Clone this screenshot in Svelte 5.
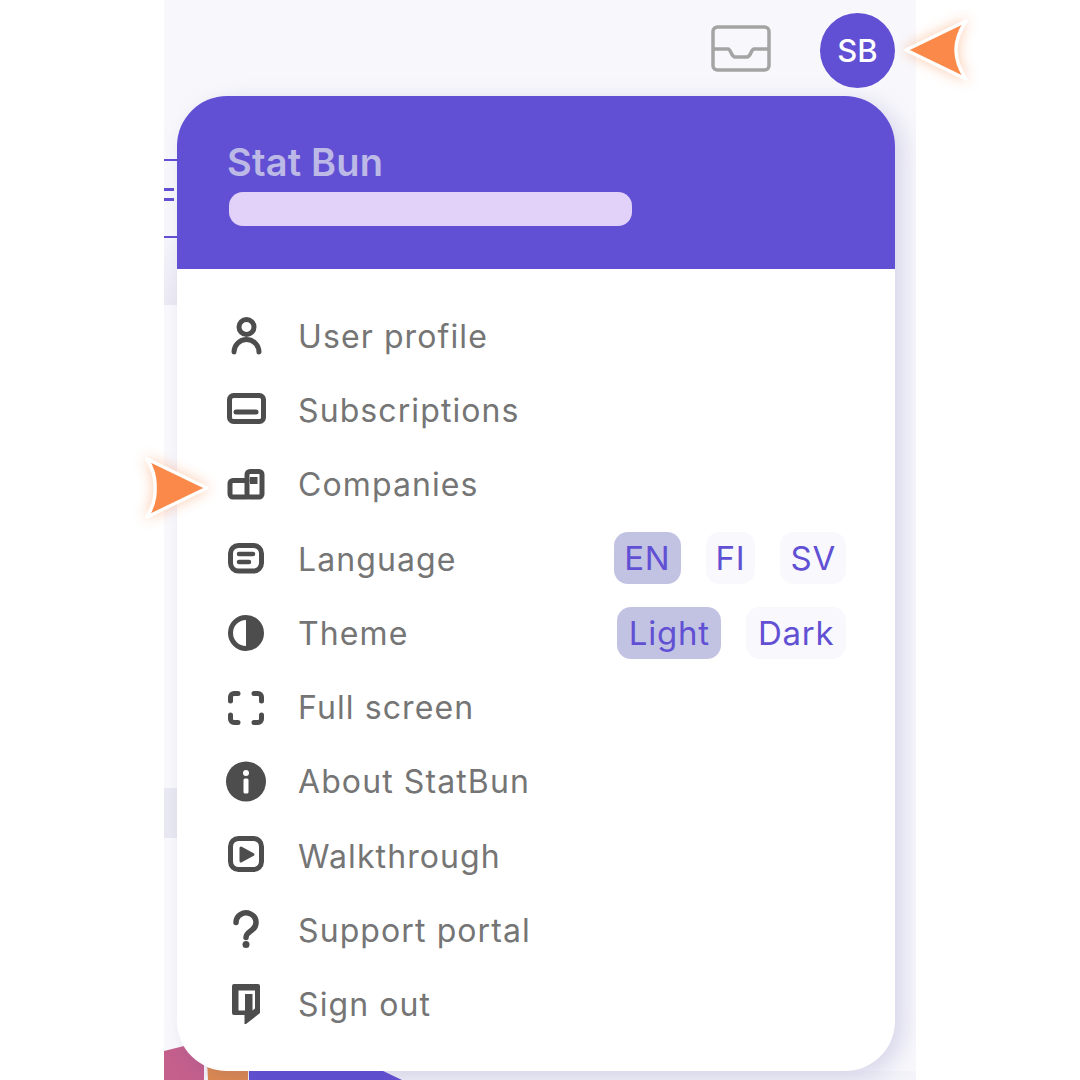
<script>
  const rows = [
    { id: 'user', label: 'User profile' },
    { id: 'card', label: 'Subscriptions' },
    { id: 'companies', label: 'Companies' },
    { id: 'language', label: 'Language', options: [{ text: 'EN', on: true }, { text: 'FI' }, { text: 'SV' }] },
    { id: 'theme', label: 'Theme', options: [{ text: 'Light', on: true }, { text: 'Dark' }] },
    { id: 'full', label: 'Full screen' },
    { id: 'about', label: 'About StatBun' },
    { id: 'walk', label: 'Walkthrough' },
    { id: 'support', label: 'Support portal' },
    { id: 'signout', label: 'Sign out' }
  ];
</script>

<div class="stage">
  <div class="page">
    <!-- what is left visible of the dashboard behind the menu -->
    <div class="behind">
      <div class="tab-lines"><span class="tab-glyph"></span></div>
      <div class="gap first"></div>
      <div class="back-card first"></div>
      <div class="gap second"></div>
      <div class="back-card second">
        <svg class="pie" viewBox="0 0 752 40" width="752" height="40">
          <rect x="150" y="31" width="602" height="9" fill="#f3f3f9" />
          <path d="M0 11L40 1V40H0Z" fill="#c5608c" />
          <path d="M42 0H84V40H44Z" fill="#e08b4c" />
          <path d="M85 20H196L238 40H85Z" fill="#6150d3" />
        </svg>
      </div>
    </div>

    <header class="topbar">
      <svg class="inbox" viewBox="0 0 60 47" width="60" height="47">
        <path d="M6.5 2H53.5A4.5 4.5 0 0 1 58 6.500V40.500A4.500 4.500 0 0 1 53.500 45H6.500A4.500 4.500 0 0 1 2 40.500V6.500A4.500 4.500 0 0 1 6.500 2ZM2 24H17C20 24 20 32 24 32H36C40 32 40 24 43 24H58" />
      </svg>
      <div class="avatar">SB</div>
    </header>

    <section class="menu">
      <div class="menu-head">
        <div class="name">Stat Bun</div>
        <div class="email"></div>
      </div>
      <ul class="menu-list">
        {#each rows as row}
          <li class="row">
            <svg class="icon" viewBox="0 0 40 40" width="40" height="40">
              {#if row.id === 'user'}
                <circle class="line" cx="20.500" cy="11" r="7.500" />
                <path class="line" d="M8 36a12.500 12.500 0 0 1 25 0" />
              {:else if row.id === 'card'}
                <rect class="line" x="3.500" y="5.500" width="34" height="26" rx="4" />
                <path class="line" d="M10 22H30" />
              {:else if row.id === 'companies'}
                <rect class="line" x="21" y="6.500" width="15" height="25.500" rx="3" />
                <path class="line" d="M21 15.500H7a3 3 0 0 0-3 3V29a3 3 0 0 0 3 3H21" />
                <rect class="solid" x="24" y="12" width="7.500" height="7" />
              {:else if row.id === 'language'}
                <rect class="line" x="4.500" y="6.500" width="31" height="25.500" rx="8" />
                <path class="line thin" d="M13 15H27M13 23H23" />
              {:else if row.id === 'theme'}
                <circle class="line" cx="20" cy="20" r="15.500" />
                <path class="solid" d="M20 4.500a15.500 15.500 0 0 1 0 31Z" />
              {:else if row.id === 'full'}
                <path class="line" d="M4.500 13V9a3.500 3.500 0 0 1 3.500-3.500H12M28 5.500H32a3.500 3.500 0 0 1 3.500 3.500V13M35.500 27V31a3.500 3.500 0 0 1-3.500 3.500H28M12 34.500H8a3.500 3.500 0 0 1-3.500-3.500V27" />
              {:else if row.id === 'about'}
                <circle class="solid" cx="20" cy="19.500" r="20" />
                <circle class="cut" cx="20" cy="11" r="3" />
                <rect class="cut" x="17.500" y="16.500" width="5" height="15" rx="1.500" />
              {:else if row.id === 'walk'}
                <rect class="line" x="4.500" y="2.500" width="31" height="31" rx="8" />
                <path class="solid round" d="M15 12L27 18.500L15 25Z" />
              {:else if row.id === 'support'}
                <path class="line heavy" d="M10 11.500a10 9.500 0 1 1 16 7.500c-3 2.300-6 3.500-6 7.500" />
                <circle class="solid" cx="20" cy="33.500" r="3.500" />
              {:else}
                <path class="solid" d="M8 -1H32a2 2 0 0 1 2 2V28L20 39H18.500V30H8a2 2 0 0 1-2-2V1a2 2 0 0 1 2-2Z" />
                <path class="cut" d="M12.500 5.500H29V23.500L26.500 25.500V9H19V25.500H12.500Z" />
              {/if}
            </svg>
            <span class="label">{row.label}</span>
            {#if row.options}
              <div class="options {row.id}">
                {#each row.options as option}
                  <span class="option" class:on={option.on}>{option.text}</span>
                {/each}
              </div>
            {/if}
          </li>
        {/each}
      </ul>
    </section>
  </div>

  <svg class="pointer top" viewBox="0 0 80 76" width="80" height="76">
    <path d="M10 38L70 9Q60 24 60 38Q60 52 70 67Z" />
  </svg>
  <svg class="pointer side" viewBox="0 0 80 76" width="80" height="76">
    <path d="M70 38L10 9Q19 24 18 38Q19 52 10 67Z" />
  </svg>
</div>

<style>
  :global(body) {
    background: #fff;
    font-family: "Inter", "Liberation Sans", sans-serif;
  }

  .stage {
    position: relative;
    width: 1080px;
    height: 1080px;
    overflow: hidden;
    background: #fff;
  }

  .page {
    position: relative;
    width: 752px;
    height: 1080px;
    margin-left: 164px;
    padding-right: 21px;
    box-sizing: border-box;
    background: #f8f8fc;
    overflow: hidden;
  }

  .behind {
    position: absolute;
    inset: 0;
  }

  .tab-lines {
    position: absolute;
    left: 0;
    top: 159px;
    width: 30px;
    height: 75px;
    border-top: 2px solid #6150d3;
    border-bottom: 2px solid #6150d3;
  }

  .tab-glyph {
    position: absolute;
    left: 0;
    top: 27px;
    width: 10px;
    height: 3px;
    background: #6150d3;
    box-shadow: 0 10px 0 #6150d3;
  }

  .gap {
    position: absolute;
    left: 0;
    width: 30px;
  }

  .gap.first {
    top: 238px;
    height: 67px;
    background: linear-gradient(#f6f6fb, #ecebf4);
  }

  .gap.second {
    top: 788px;
    height: 50px;
    background: #eaeaf3;
  }

  .back-card {
    position: absolute;
    left: 0;
    width: 30px;
    background: #fafafd;
  }

  .back-card.first {
    top: 305px;
    height: 483px;
  }

  .back-card.second {
    top: 838px;
    height: 242px;
  }

  .pie {
    position: absolute;
    left: 0;
    top: 202px;
    overflow: visible;
  }

  .topbar {
    position: relative;
    display: flex;
    align-items: center;
    justify-content: flex-end;
    gap: 49px;
    height: 96px;
    padding-top: 4px;
    box-sizing: border-box;
  }

  .inbox {
    margin-bottom: 4px;
    fill: none;
    stroke: #a4a4a4;
    stroke-width: 3.5;
    stroke-linejoin: round;
  }

  .avatar {
    display: flex;
    align-items: center;
    justify-content: center;
    width: 75px;
    height: 75px;
    border-radius: 50%;
    background: #6150d3;
    color: #fff;
    font-size: 31px;
    font-weight: 500;
  }

  .menu {
    position: relative;
    width: 718px;
    height: 975px;
    margin-left: 13px;
    border-radius: 50px;
    background: #fff;
    overflow: hidden;
    box-shadow: 8px 6px 24px rgba(80, 70, 160, 0.2);
  }

  .menu-head {
    height: 173px;
    padding: 45px 50px 0;
    box-sizing: border-box;
    background: #6150d3;
  }

  .name {
    height: 43px;
    color: #bdb9e6;
    font-size: 38px;
    line-height: 43px;
    font-weight: 600;
    letter-spacing: 0.2px;
  }

  .email {
    width: 403px;
    height: 34px;
    margin: 8px 0 0 2px;
    border-radius: 14px;
    background: #e2d2f9;
  }

  .menu-list {
    list-style: none;
    margin: 0;
    padding: 30px 49px 0;
  }

  .row {
    display: flex;
    align-items: center;
    height: 74.300px;
  }

  .icon {
    flex: none;
    overflow: visible;
  }

  .line {
    fill: none;
    stroke: #4d4d4d;
    stroke-width: 5;
    stroke-linecap: round;
    stroke-linejoin: round;
  }

  .line.thin {
    stroke-width: 4.500;
  }

  .line.heavy {
    stroke-width: 5.500;
  }

  .solid {
    fill: #4d4d4d;
  }

  .solid.round {
    stroke: #4d4d4d;
    stroke-width: 3;
    stroke-linejoin: round;
  }

  .cut {
    fill: #fff;
  }

  .label {
    margin-left: 32px;
    color: #757575;
    font-size: 32px;
    letter-spacing: 1.100px;
  }

  .options {
    display: flex;
    gap: 25px;
    margin-left: auto;
  }

  .options.language {
    margin-top: -2px;
  }

  .option {
    display: flex;
    align-items: center;
    height: 52px;
    padding: 0 10px;
    border-radius: 14px;
    background: #f8f8fd;
    color: #6150d3;
    font-size: 33px;
    letter-spacing: 0.800px;
  }

  .options.theme .option {
    padding: 0 11.500px;
  }

  .option.on {
    background: #c2c3e3;
  }

  .pointer {
    position: absolute;
    overflow: visible;
    fill: #fb8a4a;
    stroke: #fff;
    stroke-width: 3.500;
    stroke-linejoin: round;
    filter: drop-shadow(0 0 7px rgba(251, 138, 74, 0.45));
  }

  .pointer.top {
    left: 896px;
    top: 12px;
  }

  .pointer.side {
    left: 137px;
    top: 450px;
  }
</style>
